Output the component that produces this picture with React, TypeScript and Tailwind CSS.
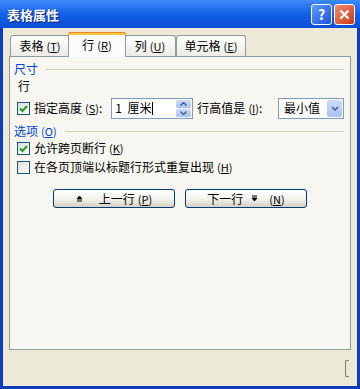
import React from "react";

const font = "font-['Noto_Sans_CJK_SC','Noto_Sans',sans-serif]";

function Key({ k }: { k: string }) {
  return (
    <span className="ml-[3px] text-[11px]">
      (<span className="underline">{k}</span>)
    </span>
  );
}

function Check({ on }: { on?: boolean }) {
  return (
    <span className="flex h-[13px] w-[13px] shrink-0 items-center justify-center border border-[#1c5180] bg-gradient-to-br from-[#dcdcd7] to-white">
      {on && (
        <svg width="9" height="9" viewBox="0 0 9 9">
          <path d="M1 4.5 L3.5 7 L8 2" fill="none" stroke="#21a121" strokeWidth="2" />
        </svg>
      )}
    </span>
  );
}

function Tab({ label, k, active, w }: { label: string; k: string; active?: boolean; w: string }) {
  if (active) {
    return (
      <div className={`relative z-10 -mx-[2px] -mb-px flex h-[25px] items-start justify-center border border-b-0 border-[#919b9c] bg-[#fcfcfe] pt-[4px] rounded-t-[3px] ${w}`}>
        <span className="absolute -inset-x-px -top-px h-[3px] rounded-t-[3px] bg-[#ffc83c] border-t border-[#e68b2c]" />
        <span className="text-[12px] leading-[16px]">
          {label}
          <Key k={k} />
        </span>
      </div>
    );
  }
  return (
    <div className={`flex h-[21px] items-start justify-center border border-b-0 border-[#919b9c] bg-gradient-to-b from-white to-[#ecebe6] pt-[2px] rounded-t-[3px] ${w}`}>
      <span className="text-[12px] leading-[16px]">
        {label}
        <Key k={k} />
      </span>
    </div>
  );
}

function Section({ title, k }: { title: string; k?: string }) {
  return (
    <div className="flex h-[14px] items-center">
      <span className="text-[12px] leading-[14px] text-[#0046d5]">
        {title}
        {k && <Key k={k} />}
      </span>
      <span className="ml-[8px] h-px flex-1 bg-[#d0d0bf]" />
    </div>
  );
}

function XpButton({ children }: { children: React.ReactNode }) {
  return (
    <div className="flex h-[19px] w-[122px] items-center justify-center rounded-[3px] border border-[#003c74] bg-gradient-to-b from-white via-[#f4f3ee] to-[#d6d0c5] text-[12px] leading-[14px]">
      {children}
    </div>
  );
}

function Arrow({ up }: { up?: boolean }) {
  return (
    <svg width="7" height="7" viewBox="0 0 7 7">
      {up ? (
        <path d="M3.5 1 L6 4 L1 4 Z M1 6 H6" fill="black" stroke="black" strokeWidth="1" />
      ) : (
        <path d="M1 1 H6 M1 3 L6 3 L3.5 6 Z" fill="black" stroke="black" strokeWidth="1" />
      )}
    </svg>
  );
}

export default function App() {
  return (
    <div className={`flex h-[389px] w-[360px] flex-col bg-[#0b3cc0] text-black ${font}`}>
      {/* title bar */}
      <div className="flex h-[28px] shrink-0 items-center bg-gradient-to-b from-[#3d8af7] via-[#1460e6] to-[#0a4fd6] pl-[7px] pr-[5px]">
        <span className="text-[13px] font-bold leading-none text-white [text-shadow:1px_1px_0_#0a1e7a]">
          表格属性
        </span>
        <div className="ml-auto flex gap-[2px]">
          <div className="flex h-[21px] w-[21px] items-center justify-center rounded-[3px] border border-white bg-gradient-to-br from-[#5d9bff] to-[#1d52d8] text-[14px] font-bold leading-none text-white">
            ?
          </div>
          <div className="flex h-[21px] w-[21px] items-center justify-center rounded-[3px] border border-white bg-gradient-to-br from-[#f08b6c] to-[#c73a18]">
            <svg width="11" height="11" viewBox="0 0 11 11">
              <path d="M1.5 1.5 L9.5 9.5 M9.5 1.5 L1.5 9.5" stroke="white" strokeWidth="2.2" />
            </svg>
          </div>
        </div>
      </div>

      {/* body */}
      <div className="mx-[3px] mb-[3px] flex flex-1 flex-col bg-[#ece9d8] px-[6px] pt-[4px]">
        <div className="flex items-end pl-[1px]">
          <Tab label="表格" k="T" w="w-[60px]" />
          <Tab label="行" k="R" active w="w-[58px]" />
          <Tab label="列" k="U" w="w-[52px]" />
          <Tab label="单元格" k="E" w="w-[70px]" />
        </div>

        <div className="h-[294px] border border-[#919b9c] bg-[#f7f6f1] pl-[4px] pr-[6px] pt-[5px] text-[12px] leading-[14px]">
          <Section title="尺寸" />
          <div className="mt-[3px] pl-[4px]">行</div>

          <div className="mt-[4px] flex h-[22px] items-center pl-[3px]">
            <Check on />
            <span className="ml-[4px]">
              指定高度<Key k="S" />:
            </span>
            <div className="ml-[9px] flex h-[21px] w-[82px] items-center border border-[#7f9db9] bg-white pl-[3px] pr-px">
              <span>1&nbsp;&nbsp;厘米</span>
              <span className="ml-px h-[13px] w-px bg-black" />
              <div className="ml-auto flex h-[17px] w-[15px] flex-col gap-px">
                <div className="flex flex-1 items-center justify-center rounded-[2px] bg-gradient-to-b from-[#cddcfc] to-[#a9c0f3]">
                  <svg width="7" height="4" viewBox="0 0 7 4">
                    <path d="M0.5 3.5 L3.5 0.5 L6.5 3.5" fill="none" stroke="#4d6185" strokeWidth="1.5" />
                  </svg>
                </div>
                <div className="flex flex-1 items-center justify-center rounded-[2px] bg-gradient-to-b from-[#cddcfc] to-[#a9c0f3]">
                  <svg width="7" height="4" viewBox="0 0 7 4">
                    <path d="M0.5 0.5 L3.5 3.5 L6.5 0.5" fill="none" stroke="#4d6185" strokeWidth="1.5" />
                  </svg>
                </div>
              </div>
            </div>
            <span className="ml-[4px]">
              行高值是<Key k="I" />:
            </span>
            <div className="ml-auto flex h-[21px] w-[66px] items-center border border-[#7f9db9] bg-white pl-[5px] pr-px">
              <span>最小值</span>
              <div className="ml-auto flex h-[17px] w-[15px] items-center justify-center rounded-[2px] bg-gradient-to-b from-[#cddcfc] to-[#a9c0f3]">
                <svg width="8" height="5" viewBox="0 0 8 5">
                  <path d="M1 1 L4 4 L7 1" fill="none" stroke="#4d6185" strokeWidth="1.6" />
                </svg>
              </div>
            </div>
          </div>

          <div className="mt-[5px]">
            <Section title="选项" k="O" />
          </div>

          <div className="mt-[3px] flex h-[14px] items-center pl-[3px]">
            <Check on />
            <span className="ml-[4px]">
              允许跨页断行<Key k="K" />
            </span>
          </div>
          <div className="mt-[5px] flex h-[14px] items-center pl-[3px]">
            <Check />
            <span className="ml-[4px]">
              在各页顶端以标题行形式重复出现<Key k="H" />
            </span>
          </div>

          <div className="mt-[15px] flex gap-[10px] pl-[39px]">
            <XpButton>
              <span className="mr-[16px] flex">
                <Arrow up />
              </span>
              上一行<Key k="P" />
            </XpButton>
            <XpButton>
              下一行
              <span className="mx-[8px] flex">
                <Arrow />
              </span>
              <Key k="N" />
            </XpButton>
          </div>
        </div>

        <div className="flex flex-1 items-center justify-end pr-[2px]">
          <div className="h-[17px] w-[4px] rounded-l-[2px] border border-r-0 border-[#7a7a7a]" />
        </div>
      </div>
    </div>
  );
}
